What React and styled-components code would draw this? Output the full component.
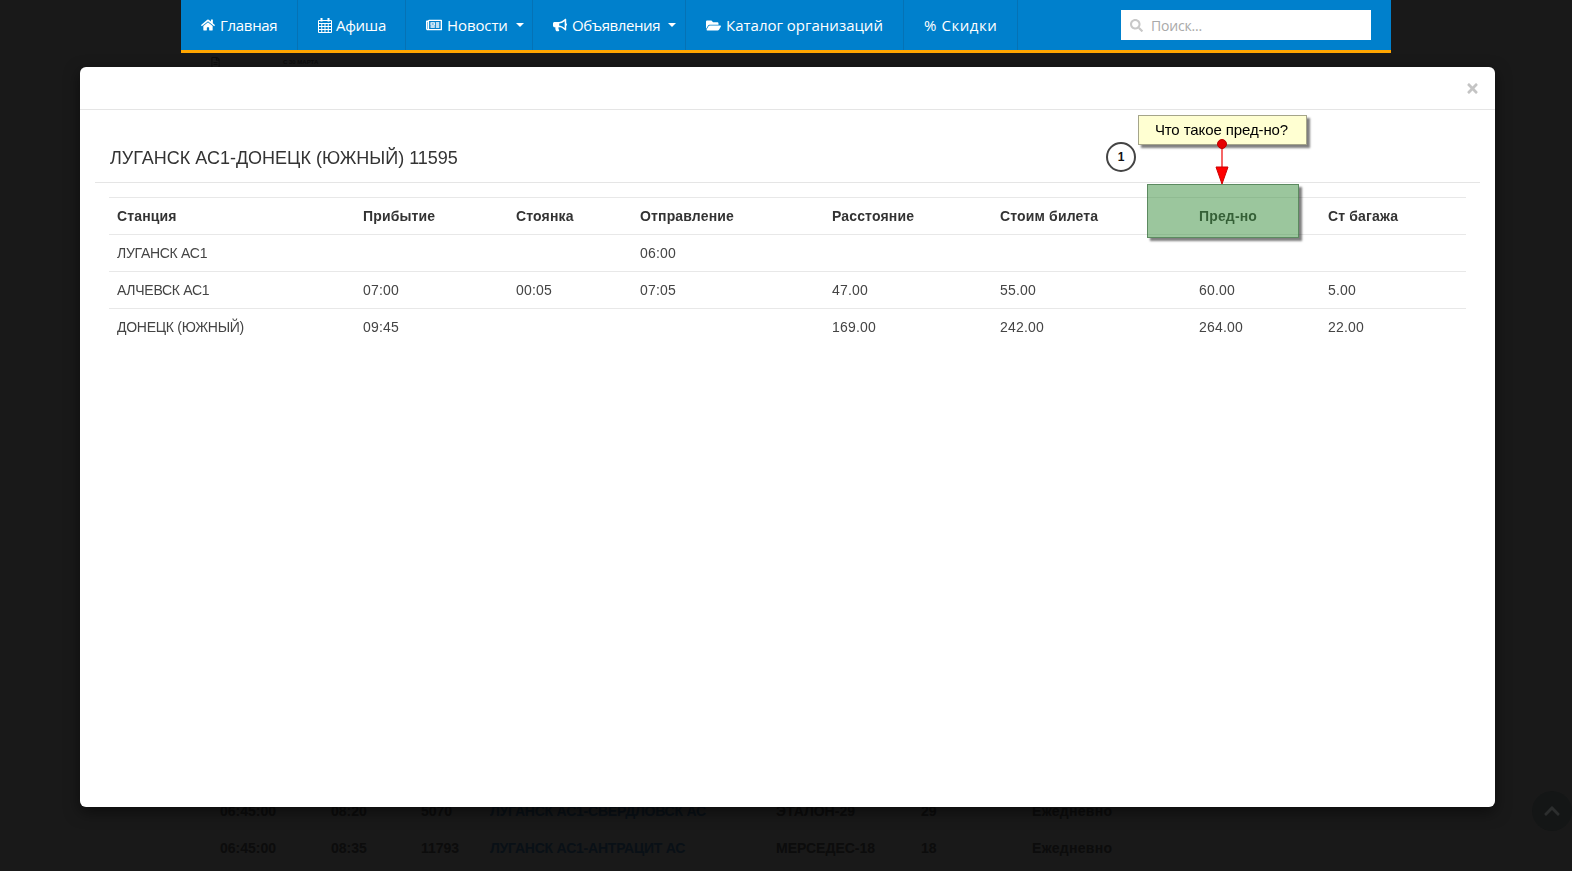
import React from "react";
import styled, { createGlobalStyle } from "styled-components";
import {
  FaHome,
  FaRegNewspaper,
  FaBullhorn,
  FaFolderOpen,
  FaSearch,
  FaChevronUp,
  FaRegFileAlt,
  FaTimes,
} from "react-icons/fa";

const Global = createGlobalStyle`
  html, body { margin: 0; padding: 0; height: 100%; overflow: hidden; background: #fff; }
  * { box-sizing: border-box; }
  body { font-family: "Liberation Sans", Arial, sans-serif; font-size: 14px; color: #333; }
`;

const Container = styled.div`
  width: 1210px;
  height: 871px;
  margin: 0 auto;
  background: #f8f8f8;
  overflow: hidden;
`;

const Nav = styled.nav`
  position: relative;
  z-index: 30;
  height: 53px;
  display: flex;
  align-items: stretch;
  justify-content: space-between;
  padding-right: 20px;
  background: #0080cc;
  border-bottom: 3px solid #ffa500;
  font-family: "Open Sans", sans-serif;
  font-size: 15px;
  color: #fff;
`;

const NavList = styled.div`
  display: flex;
`;

const NavItem = styled.a`
  display: flex;
  align-items: center;
  gap: ${(p) => p.$gap ?? 5}px;
  width: ${(p) => p.$w}px;
  padding-left: 20px;
  border-right: 1px solid #0572b5;
  white-space: nowrap;
  letter-spacing: ${(p) => p.$ls || 0}px;
  svg { flex: none; font-size: ${(p) => p.$icon || 14}px; }
`;

const Caret = styled.span`
  width: 0;
  height: 0;
  margin-left: 3px;
  border-left: 4px solid transparent;
  border-right: 4px solid transparent;
  border-top: 4px solid #fff;
`;

const SearchBox = styled.label`
  width: 250px;
  height: 30px;
  margin-top: 10px;
  padding-left: 9px;
  display: flex;
  align-items: center;
  gap: 8px;
  background: #fff;
  color: #c8c8c8;
  svg { font-size: 13px; flex: none; }
`;

const SearchInput = styled.input`
  flex: 1;
  min-width: 0;
  border: 0;
  outline: 0;
  padding: 0;
  background: transparent;
  font-family: "Open Sans", sans-serif;
  font-size: 14px;
  letter-spacing: -0.2px;
  &::placeholder { color: #a9a9a9; opacity: 1; }
`;

const NoticeLine = styled.div`
  height: 739px;
  padding: 5px 0 0 29px;
  display: flex;
  gap: 62px;
  color: #777;
  font-size: 6px;
  font-weight: 700;
  line-height: 8px;
  svg { font-size: 11px; margin-top: -1px; }
`;

const ScheduleRow = styled.div`
  height: 37px;
  padding-left: 39px;
  display: grid;
  grid-template-columns: 111px 90px 69px 286px 145px 111px 1fr;
  align-items: center;
  font-weight: 700;
  color: #777;
`;

const RouteLink = styled.span`
  color: #5aa0e0;
  letter-spacing: -0.22px;
`;

const Days = styled.span`
  letter-spacing: 0.3px;
`;

const Backdrop = styled.div`
  position: fixed;
  inset: 0;
  z-index: 20;
  background: rgba(0, 0, 0, 0.9);
`;

const ToTop = styled.div`
  position: fixed;
  right: 0;
  top: 791px;
  z-index: 25;
  width: 40px;
  height: 40px;
  border-radius: 50%;
  background: #141616;
  color: #2c2e2e;
  display: flex;
  align-items: center;
  justify-content: center;
  font-size: 18px;
`;

const Modal = styled.div`
  position: fixed;
  left: 80px;
  top: 67px;
  width: 1415px;
  height: 740px;
  z-index: 40;
  background: #fff;
  border-radius: 6px;
  box-shadow: 0 5px 15px rgba(0, 0, 0, 0.5);
`;

const ModalHeader = styled.div`
  height: 43px;
  padding: 0 15px;
  display: flex;
  align-items: center;
  justify-content: flex-end;
  border-bottom: 1px solid #e5e5e5;
`;

const Close = styled.span`
  display: flex;
  color: #c4c4c4;
  font-size: 15px;
`;

const ModalBody = styled.div`
  padding: 0 15px;
`;

const Title = styled.h4`
  margin: 0;
  height: 73px;
  padding: 38px 0 0 15px;
  border-bottom: 1px solid #e5e5e5;
  font-size: 18px;
  font-weight: 400;
  line-height: 20px;
  color: #333;
`;

const Table = styled.table`
  width: 1357px;
  margin: 14px 0 0 14px;
  border-collapse: collapse;
  table-layout: fixed;
`;

const Th = styled.th`
  width: ${(p) => p.$w}px;
  height: 37px;
  padding: 8px;
  text-align: left;
  font-size: 14px;
  font-weight: 700;
  line-height: 20px;
  letter-spacing: 0.15px;
  border-top: 1px solid #e8e8e8;
`;

const Td = styled.td`
  height: 37px;
  padding: 8px;
  line-height: 20px;
  color: #444;
  letter-spacing: ${(p) => (p.$name ? -0.28 : 0.2)}px;
  border-top: 1px solid #e8e8e8;
`;

const Callout = styled.div`
  position: absolute;
  left: 1058px;
  top: 48px;
  width: 169px;
  height: 30px;
  padding: 0 2px 2px 0;
  display: flex;
  align-items: center;
  justify-content: center;
  background: #ffffd2;
  border: 1px solid #a5a58a;
  box-shadow: 3px 3px 2px rgba(0, 0, 0, 0.5);
  font-size: 15px;
  letter-spacing: -0.1px;
  color: #000;
`;

const Step = styled.div`
  position: absolute;
  left: 1026px;
  top: 75px;
  width: 30px;
  height: 30px;
  border: 2px solid #444;
  border-radius: 50%;
  background: #fff;
  display: flex;
  align-items: center;
  justify-content: center;
  font-size: 12px;
  font-weight: 700;
  color: #111;
`;

const Highlight = styled.div`
  position: absolute;
  left: 1067px;
  top: 117px;
  width: 152px;
  height: 54px;
  background: rgba(56, 142, 60, 0.5);
  border: 1px solid rgba(40, 90, 45, 0.55);
  box-shadow: 3px 3px 2px rgba(0, 0, 0, 0.5);
`;

const Pointer = styled.svg`
  position: absolute;
  left: 1130px;
  top: 70px;
  width: 24px;
  height: 48px;
`;

const CalendarIcon = () => (
  <svg viewBox="0 0 14 15" width="14" height="15" style={{ width: 14, height: 15 }}>
    <rect x="2.5" y="0" width="2" height="3.5" fill="#fff" />
    <rect x="9.5" y="0" width="2" height="3.5" fill="#fff" />
    <path
      d="M.5 2.5h13v12H.5zM.5 5.5h13M.5 8.5h13M.5 11.5h13M3.75 5.5v9M7 5.5v9M10.25 5.5v9"
      fill="none"
      stroke="#fff"
      strokeWidth="1"
    />
  </svg>
);

const columns = [
  ["Станция", 246],
  ["Прибытие", 153],
  ["Стоянка", 124],
  ["Отправление", 192],
  ["Расстояние", 168],
  ["Стоим билета", 199],
  ["Пред-но", 129],
  ["Ст багажа", 146],
];

const rows = [
  ["ЛУГАНСК АС1", "", "", "06:00", "", "", "", ""],
  ["АЛЧЕВСК АС1", "07:00", "00:05", "07:05", "47.00", "55.00", "60.00", "5.00"],
  ["ДОНЕЦК (ЮЖНЫЙ)", "09:45", "", "", "169.00", "242.00", "264.00", "22.00"],
];

const schedule = [
  ["06:45:00", "08:20", "5070", "ЛУГАНСК АС1-СВЕРДЛОВСК АС", "ЭТАЛОН-29", "29", "Ежедневно"],
  ["06:45:00", "08:35", "11793", "ЛУГАНСК АС1-АНТРАЦИТ АС", "МЕРСЕДЕС-18", "18", "Ежедневно"],
];

export default function App() {
  return (
    <>
      <Global />
      <Container>
        <Nav>
          <NavList>
            <NavItem $w={117} $ls={-0.3}><FaHome />Главная</NavItem>
            <NavItem $w={108} $ls={-0.3} $gap={4}><CalendarIcon />Афиша</NavItem>
            <NavItem $w={127} $ls={-0.1} $icon={16}><FaRegNewspaper />Новости<Caret /></NavItem>
            <NavItem $w={153} $ls={-0.4}><FaBullhorn />Объявления<Caret /></NavItem>
            <NavItem $w={218} $icon={15}><FaFolderOpen />Каталог организаций</NavItem>
            <NavItem $w={114} $ls={0.55}>% Скидки</NavItem>
          </NavList>
          <SearchBox>
            <FaSearch />
            <SearchInput placeholder="Поиск..." />
          </SearchBox>
        </Nav>
        <NoticeLine>
          <FaRegFileAlt />
          <span>С 30 МАРТА</span>
        </NoticeLine>
        {schedule.map((r) => (
          <ScheduleRow key={r[2]}>
            <span>{r[0]}</span>
            <span>{r[1]}</span>
            <span>{r[2]}</span>
            <RouteLink>{r[3]}</RouteLink>
            <span>{r[4]}</span>
            <span>{r[5]}</span>
            <Days>{r[6]}</Days>
          </ScheduleRow>
        ))}
      </Container>
      <Backdrop />
      <ToTop><FaChevronUp /></ToTop>
      <Modal>
        <ModalHeader><Close><FaTimes /></Close></ModalHeader>
        <ModalBody>
          <Title>ЛУГАНСК АС1-ДОНЕЦК (ЮЖНЫЙ) 11595</Title>
          <Table>
            <thead>
              <tr>
                {columns.map(([name, w]) => (
                  <Th key={name} $w={w}>{name}</Th>
                ))}
              </tr>
            </thead>
            <tbody>
              {rows.map((r) => (
                <tr key={r[0]}>
                  {r.map((c, i) => (
                    <Td key={i} $name={i === 0}>{c}</Td>
                  ))}
                </tr>
              ))}
            </tbody>
          </Table>
        </ModalBody>
        <Highlight />
        <Callout>Что такое пред-но?</Callout>
        <Step>1</Step>
        <Pointer viewBox="0 0 24 48">
          <line x1="12" y1="7" x2="12" y2="32" stroke="#e00" strokeWidth="1.2" />
          <circle cx="12" cy="7" r="4.5" fill="#e60000" stroke="#b00" />
          <polygon points="6,30 18,30 12,47" fill="#f00" stroke="#c00" />
        </Pointer>
      </Modal>
    </>
  );
}
